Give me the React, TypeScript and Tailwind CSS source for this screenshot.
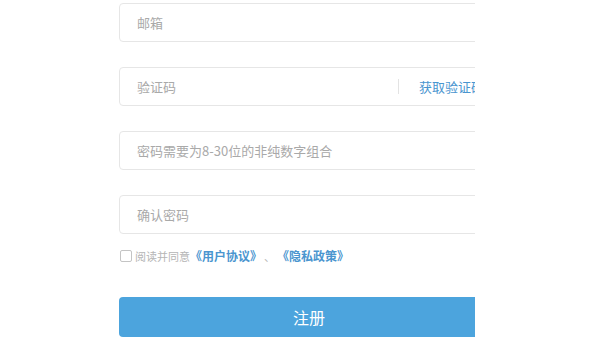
import React from "react";

const font = { fontFamily: '"Noto Sans CJK SC", "Noto Sans", sans-serif' };

function Field({ placeholder, children }: { placeholder: string; children?: React.ReactNode }) {
  return (
    <div className="flex h-[39px] w-[380px] items-center rounded-[4px] border border-[#e6e6e6] bg-white pl-[17px] pr-[14px]">
      <span className="flex-1 text-[13px] text-[#a9a9a9]">{placeholder}</span>
      {children}
    </div>
  );
}

export default function App() {
  return (
    <div className="h-[346px] w-[600px] bg-white" style={font}>
      <div className="ml-[119px] w-[356px] overflow-hidden pt-[3px]">
        <div className="flex w-[380px] flex-col gap-[25px]">
          <Field placeholder="邮箱" />
          <Field placeholder="验证码">
            <div className="mr-[20px] h-[15px] w-px bg-[#e3e3e3]" />
            <span className="text-[13px] text-[#4a95cf]">获取验证码</span>
          </Field>
          <Field placeholder="密码需要为8-30位的非纯数字组合" />
          <Field placeholder="确认密码" />
        </div>
        <div className="mt-[15px] flex h-[14px] items-center">
          <span className="ml-px mr-[3px] h-[12px] w-[12px] rounded-[2px] border border-[#c4c4c4] bg-white" />
          <span className="text-[11px] text-[#b5b5b5]">阅读并同意</span>
          <span className="text-[12px] font-semibold text-[#4a95cf]">《用户协议》</span>
          <span className="mx-[2px] text-[11px] text-[#b5b5b5]">、</span>
          <span className="text-[12px] font-semibold text-[#4a95cf]">《隐私政策》</span>
        </div>
        <div className="mt-[34px] flex h-[40px] w-[380px] items-center justify-center rounded-[4px] bg-[#4ca4dd] text-[16px] text-white">
          注册
        </div>
      </div>
    </div>
  );
}
